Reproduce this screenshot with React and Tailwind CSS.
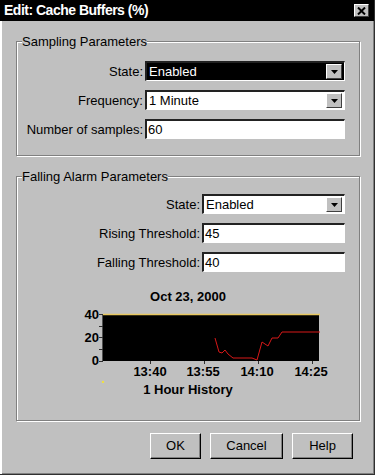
const FONT = { fontFamily: '"Liberation Sans", Arial, sans-serif' };

const RED_LINE = [
  [198, 34], [202, 48], [205, 49], [208, 46], [211, 50], [216, 54], [223, 54],
  [230, 54], [235, 54], [240, 56], [245, 38], [248, 40], [251, 42], [255, 34],
  [261, 34], [265, 28], [270, 28], [303, 28],
];

function DropButton() {
  return (
    <span className="flex h-[15px] w-[16px] items-center justify-center border border-t-white border-l-white border-r-[#404040] border-b-[#404040] bg-[#c0c0c0]">
      <svg width="7" height="4" viewBox="0 0 7 4"><path d="M0 0h7L3.5 4z" fill="#000" /></svg>
    </span>
  );
}

function Select({ value, dark, width }) {
  return (
    <div className={`flex h-[20px] items-center justify-between border-t-2 border-l-2 border-b border-r border-t-[#222] border-l-[#222] border-b-white border-r-white pl-[2px] pr-[2px] ${dark ? 'bg-black text-white' : 'bg-white text-black'} ${width}`}>
      <span className="text-[13px] leading-none">{value}</span>
      <DropButton />
    </div>
  );
}

function Field({ value, width }) {
  return (
    <div className={`flex h-[20px] items-center border-t-2 border-l-2 border-b border-r border-t-[#222] border-l-[#222] border-b-white border-r-white bg-white pl-[1px] text-[13px] leading-none text-black ${width}`}>
      {value}
    </div>
  );
}

function Row({ label, children }) {
  return (
    <div className="flex items-center justify-end gap-[2px]">
      <span className="text-[13px] leading-none text-black">{label}</span>
      {children}
    </div>
  );
}

function Group({ title, children, className = '' }) {
  return (
    <fieldset className={`w-[344px] border border-[#808080] shadow-[inset_1px_1px_0_#fff,1px_1px_0_#fff] ${className}`}>
      <legend className="ml-[5px] bg-[#c0c0c0] text-[13px] leading-[15px] text-black">{title}</legend>
      {children}
    </fieldset>
  );
}

function Button({ children, width }) {
  return (
    <button className={`h-[26px] ${width} border border-t-white border-l-white border-r-black border-b-black bg-[#c0c0c0] text-[13px] text-black shadow-[inset_-1px_-1px_0_#808080]`}>
      {children}
    </button>
  );
}

function Chart() {
  const pts = RED_LINE.map(p => p.join(',')).join(' ');
  return (
    <svg width="342" height="79" className="block" style={FONT}>
      <rect x="86" y="10" width="216" height="47" fill="#000" />
      <line x1="86" y1="10.5" x2="303" y2="10.5" stroke="#e8c860" strokeWidth="1.5" />
      <line x1="85.5" y1="10" x2="85.5" y2="58" stroke="#505050" />
      {[10, 22, 33, 45, 57].map(y => (
        <line key={y} x1="82" y1={y + 0.5} x2="86" y2={y + 0.5} stroke="#303030" />
      ))}
      {[133, 187, 241, 295].map(x => (
        <line key={x} x1={x + 0.5} y1="57" x2={x + 0.5} y2="60" stroke="#303030" />
      ))}
      <polyline points={pts} fill="none" stroke="#d81818" strokeWidth="1" />
      <g fontSize="13" fontWeight="bold" fill="#000">
        <text x="82" y="15" textAnchor="end">40</text>
        <text x="82" y="38" textAnchor="end">20</text>
        <text x="82" y="61" textAnchor="end">0</text>
        <text x="133" y="72" textAnchor="middle">13:40</text>
        <text x="186" y="72" textAnchor="middle">13:55</text>
        <text x="240" y="72" textAnchor="middle">14:10</text>
        <text x="294" y="72" textAnchor="middle">14:25</text>
      </g>
      <circle cx="86" cy="78" r="1.2" fill="#f0e040" />
    </svg>
  );
}

export default function App() {
  return (
    <div style={FONT} className="flex h-[475px] w-[375px] flex-col overflow-hidden border-r border-b border-r-[#303030] border-b-[#303030] bg-[#c0c0c0] shadow-[inset_2px_0_0_#fff,inset_-1px_-1px_0_#808080]">
      <div className="flex h-[21px] shrink-0 items-center justify-between bg-black pl-[4px] pr-[5px]">
        <span className="text-[14px] font-bold tracking-[-0.5px] text-white">Edit: Cache Buffers (%)</span>
        <span className="flex h-[13px] w-[15px] items-center justify-center border border-t-white border-l-white border-r-[#404040] border-b-[#404040] bg-[#c0c0c0]">
          <svg width="9" height="8" viewBox="0 0 9 8"><path d="M1 0.5L8 7.5M8 0.5L1 7.5" stroke="#000" strokeWidth="2" /></svg>
        </span>
      </div>

      <div className="flex flex-col pl-[16px] pt-[13px]">
        <Group title="Sampling Parameters">
          <div className="flex flex-col gap-[9px] pr-[14px] pt-[12px] pb-[16px]">
            <Row label="State:"><Select value="Enabled" dark width="w-[200px]" /></Row>
            <Row label="Frequency:"><Select value="1 Minute" width="w-[200px]" /></Row>
            <Row label="Number of samples:"><Field value="60" width="w-[200px]" /></Row>
          </div>
        </Group>

        <Group title="Falling Alarm Parameters" className="mt-[13px]">
          <div className="flex flex-col gap-[9px] pr-[14px] pt-[10px]">
            <Row label="State:"><Select value="Enabled" width="w-[143px]" /></Row>
            <Row label="Rising Threshold:"><Field value="45" width="w-[143px]" /></Row>
            <Row label="Falling Threshold:"><Field value="40" width="w-[143px]" /></Row>
          </div>
          <div className="mt-[17px] text-center text-[13px] font-bold leading-[15px] text-black">Oct 23, 2000</div>
          <Chart />
          <div className="pb-[23px] text-center text-[13px] font-bold leading-[14px] text-black">1 Hour History</div>
        </Group>
      </div>

      <div className="mt-[12px] flex justify-end gap-[9px] pr-[21px]">
        <Button width="w-[51px]">OK</Button>
        <Button width="w-[73px]">Cancel</Button>
        <Button width="w-[61px]">Help</Button>
      </div>
    </div>
  );
}
